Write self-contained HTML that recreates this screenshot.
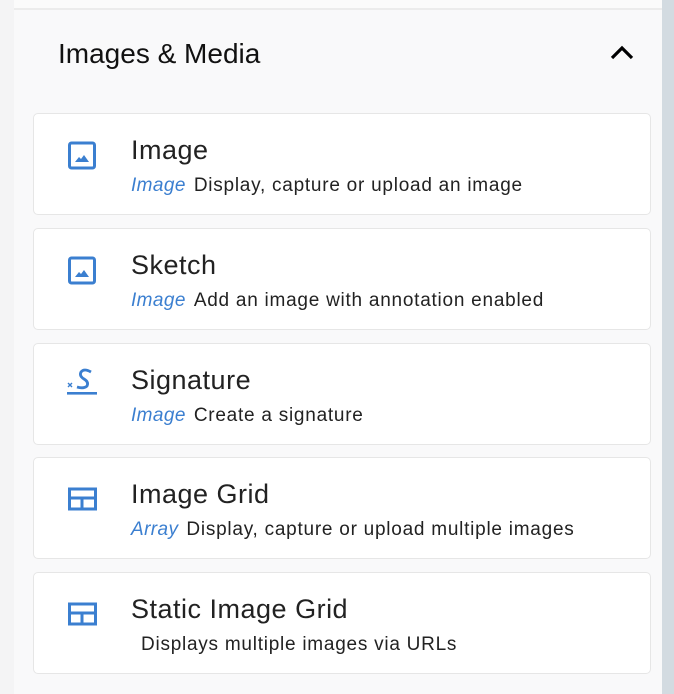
<!DOCTYPE html>
<html><head><style>
body{margin:0;width:674px;height:694px;overflow:hidden;background:#f4f4f5;font-family:"Liberation Sans",sans-serif;position:relative}
.panel{position:absolute;left:14px;top:0;width:648px;height:694px;background:#f9f9fa}
.topbar{position:absolute;left:14px;top:0;width:648px;height:8px;background:#fbfbfb;border-bottom:2px solid #ececec}
.rbar{position:absolute;left:662px;top:0;width:12px;height:694px;background:#d3dbe1}
h1{position:absolute;left:58px;top:38px;margin:0;font-weight:normal;font-size:28px;color:#111}
.chev{position:absolute;left:610px;top:44px}
.card{position:absolute;left:33px;width:616px;height:100px;background:#fff;border:1px solid #e6e6e6;border-radius:5px}
.card svg{position:absolute;left:33px;top:26px}
.t{position:absolute;left:97px;top:21px;font-size:27px;color:#222;letter-spacing:.5px}
.s{position:absolute;left:97px;top:61px;font-size:19px;color:#222;letter-spacing:.75px;white-space:nowrap}
.s i{color:#3b7fd0;margin-right:8px;letter-spacing:.4px}
</style></head><body>
<div class="panel"></div><div class="topbar"></div><div class="rbar"></div>
<h1>Images &amp; Media</h1>
<svg class="chev" width="24" height="18" viewBox="0 0 24 18"><path d="M2 14 L12 4 L22 14" fill="none" stroke="#000" stroke-width="3.2"/></svg>

<div class="card" style="top:113px"><svg width="30" height="30" viewBox="0 0 30 30"><rect x="2.5" y="3" width="25" height="25" rx="2" fill="none" stroke="#3b7fd0" stroke-width="3"/><path d="M8 22 L12 17 L14 19 L17 15 L22 22Z" fill="#3b7fd0"/></svg>
<div class="t">Image</div><div class="s"><i>Image</i>Display, capture or upload an image</div></div>

<div class="card" style="top:228px"><svg width="30" height="30" viewBox="0 0 30 30"><rect x="2.5" y="3" width="25" height="25" rx="2" fill="none" stroke="#3b7fd0" stroke-width="3"/><path d="M8 22 L12 17 L14 19 L17 15 L22 22Z" fill="#3b7fd0"/></svg>
<div class="t">Sketch</div><div class="s"><i>Image</i>Add an image with annotation enabled</div></div>

<div class="card" style="top:343px"><svg width="34" height="34" viewBox="0 0 34 34" style="left:32px;top:22px"><path d="M2 17 l4 4 M6 17 l-4 4" stroke="#3b7fd0" stroke-width="1.4"/><path d="M25 6 Q18 2 15 6 Q13 10 18 13 Q23 16 21 20 Q18 23 11 21" fill="none" stroke="#3b7fd0" stroke-width="2.8"/><rect x="1" y="26" width="30" height="2.6" fill="#3b7fd0"/></svg>
<div class="t">Signature</div><div class="s"><i>Image</i>Create a signature</div></div>

<div class="card" style="top:457px"><svg width="30" height="30" viewBox="0 0 30 30"><rect x="2.5" y="5" width="26" height="20" fill="none" stroke="#3b7fd0" stroke-width="3"/><path d="M2.5 14 H28.5 M15 14 V25" stroke="#3b7fd0" stroke-width="3"/></svg>
<div class="t">Image Grid</div><div class="s"><i>Array</i>Display, capture or upload multiple images</div></div>

<div class="card" style="top:572px"><svg width="30" height="30" viewBox="0 0 30 30"><rect x="2.5" y="5" width="26" height="20" fill="none" stroke="#3b7fd0" stroke-width="3"/><path d="M2.5 14 H28.5 M15 14 V25" stroke="#3b7fd0" stroke-width="3"/></svg>
<div class="t">Static Image Grid</div><div class="s" style="left:107px">Displays multiple images via URLs</div></div>
</body></html>
